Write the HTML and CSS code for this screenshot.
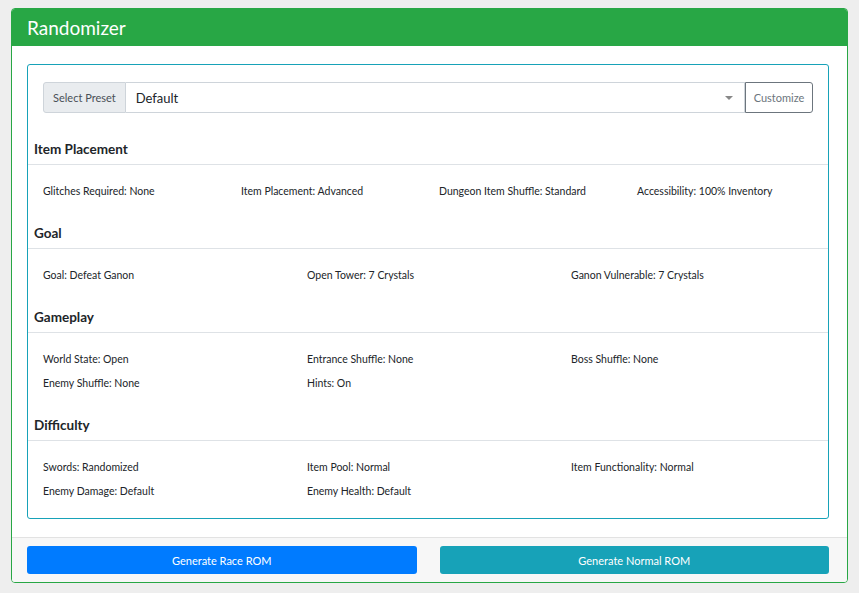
FILE: index.html
```html
<!DOCTYPE html>
<html lang="en">

<head>
  <meta charset="UTF-8">
  <meta name="viewport" content="width=device-width, initial-scale=1.0">
  <title>Randomizer</title>
  <link rel="stylesheet" href="styles.css">
</head>

<body>

  <div class="card">
    <div class="card-header">
      <h1>Randomizer</h1>
    </div>

    <div class="card-body">
      <div class="settings">
        <div class="preset">
          <span class="preset-label">Select Preset</span>
          <div class="preset-select">
            <span>Default</span>
            <span class="caret"></span>
          </div>
          <button type="button" class="btn-customize">Customize</button>
        </div>

        <h2 class="section-title">Item Placement</h2>
        <div class="section-items cols-4">
          <div>Glitches Required: None</div>
          <div>Item Placement: Advanced</div>
          <div>Dungeon Item Shuffle: Standard</div>
          <div>Accessibility: 100% Inventory</div>
        </div>

        <h2 class="section-title">Goal</h2>
        <div class="section-items cols-3">
          <div>Goal: Defeat Ganon</div>
          <div>Open Tower: 7 Crystals</div>
          <div>Ganon Vulnerable: 7 Crystals</div>
        </div>

        <h2 class="section-title">Gameplay</h2>
        <div class="section-items cols-3">
          <div>World State: Open</div>
          <div>Entrance Shuffle: None</div>
          <div>Boss Shuffle: None</div>
          <div>Enemy Shuffle: None</div>
          <div>Hints: On</div>
        </div>

        <h2 class="section-title">Difficulty</h2>
        <div class="section-items cols-3">
          <div>Swords: Randomized</div>
          <div>Item Pool: Normal</div>
          <div>Item Functionality: Normal</div>
          <div>Enemy Damage: Default</div>
          <div>Enemy Health: Default</div>
        </div>
      </div>
    </div>

    <div class="card-footer">
      <button type="button" class="btn btn-race">Generate Race ROM</button>
      <button type="button" class="btn btn-normal">Generate Normal ROM</button>
    </div>
  </div>

</body>

</html>
```

FILE: styles.css
```css
body {
  margin: 0;
  padding: 8px 11px;
  background-color: #eeeeee;
  font-family: "Lato", "Open Sans", sans-serif;
  color: #212529;
}

.card {
  background-color: #fff;
  border: 1px solid #28a745;
  border-radius: 4px;
  overflow: hidden;
}

.card-header {
  background-color: #28a745;
  height: 37px;
  display: flex;
  align-items: center;
  padding-left: 15px;
}

.card-header h1 {
  margin: 0;
  font-size: 19px;
  font-weight: 400;
  color: #fff;
}

.card-body {
  padding: 18px 18px 18px 15px;
}

.settings {
  border: 1px solid #17a2b8;
  border-radius: 3px;
  padding-top: 17px;
}

/* preset picker */
.preset {
  display: flex;
  height: 31px;
  margin: 0 15px 21px 15px;
}

.preset-label {
  display: flex;
  align-items: center;
  padding: 0 9px;
  font-size: 11px;
  color: #495057;
  background-color: #e9ecef;
  border: 1px solid #ced4da;
  border-radius: 3px 0 0 3px;
}

.preset-select {
  flex: 1;
  display: flex;
  align-items: center;
  justify-content: space-between;
  padding: 0 11px 0 10px;
  font-size: 13px;
  border: 1px solid #ced4da;
  border-left: none;
}

.caret {
  width: 0;
  height: 0;
  border-left: 4px solid transparent;
  border-right: 4px solid transparent;
  border-top: 4px solid #888;
}

.btn-customize {
  width: 68px;
  font-family: inherit;
  font-size: 11px;
  color: #6c757d;
  background: #fff;
  border: 1px solid #6c757d;
  border-radius: 0 3px 3px 0;
  padding: 0;
}

/* sections */
.section-title {
  margin: 0;
  padding: 5px 6px;
  line-height: 20px;
  font-size: 13.5px;
  font-weight: 700;
  color: #212529;
  border-bottom: 1px solid #dee2e6;
}

.section-items {
  display: grid;
  width: 792px;
  padding: 14px 0 15px 15px;
  font-size: 10.5px;
  line-height: 24px;
}

.cols-4 {
  grid-template-columns: repeat(4, 198px);
}

.cols-3 {
  grid-template-columns: repeat(3, 264px);
}

/* footer */
.card-footer {
  display: grid;
  grid-template-columns: 1fr 1fr;
  gap: 23px;
  padding: 8px 18px 8px 15px;
  background-color: #f7f7f7;
  border-top: 1px solid #e2e2e2;
}

.btn {
  height: 28px;
  font-family: inherit;
  font-size: 11px;
  color: #fff;
  border: none;
  border-radius: 3px;
}

.btn-race {
  background-color: #007bff;
}

.btn-normal {
  background-color: #17a2b8;
}
```
